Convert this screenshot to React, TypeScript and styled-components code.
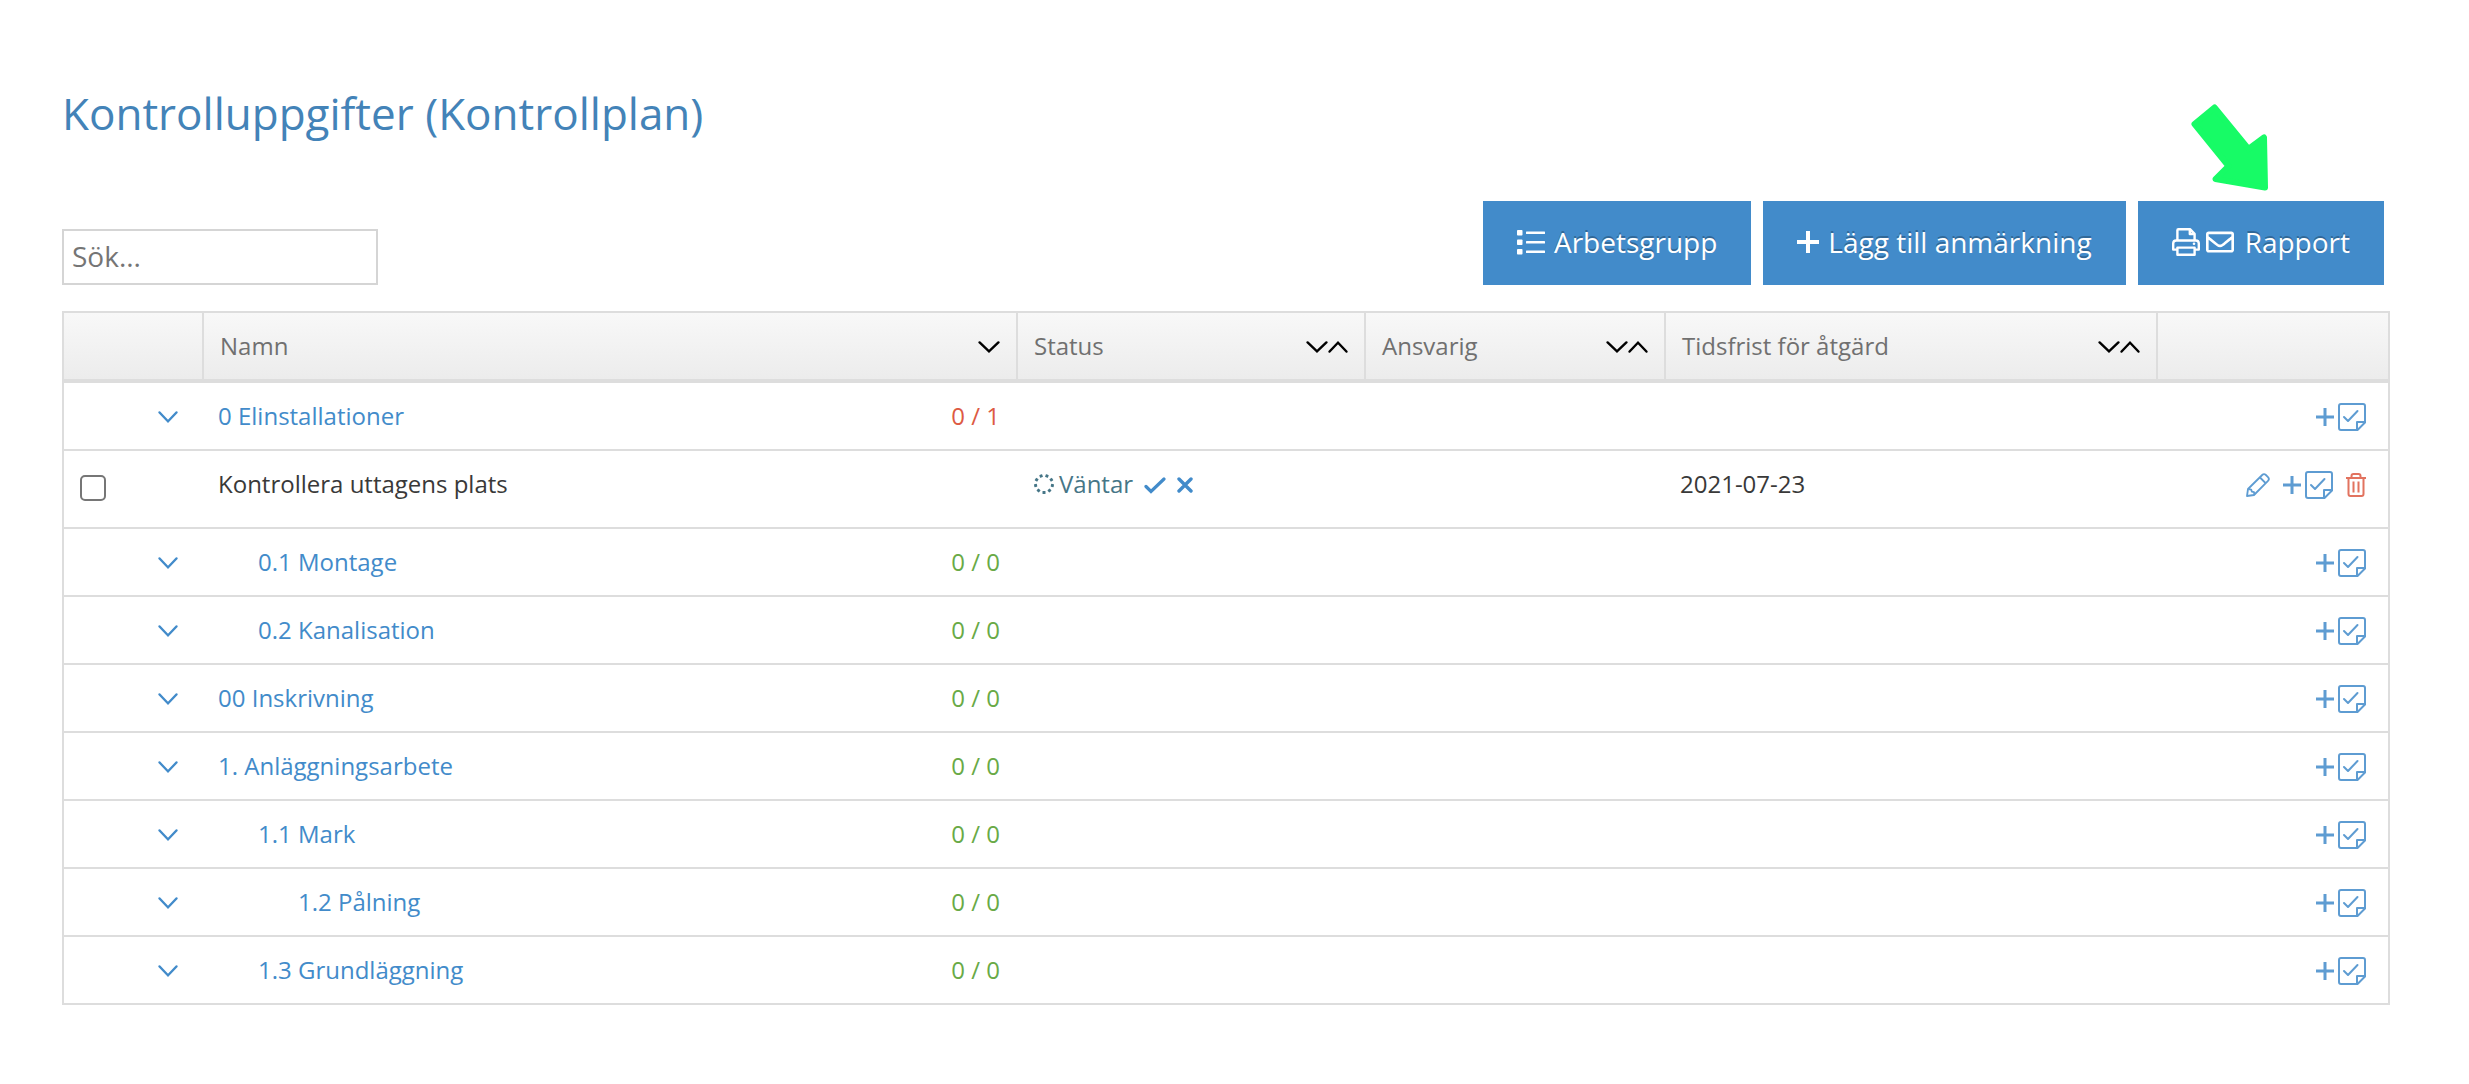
import React from 'react';
import styled, { createGlobalStyle } from 'styled-components';
import { FaRegEnvelope } from 'react-icons/fa';

const GlobalStyle = createGlobalStyle`
  *, *::before, *::after { box-sizing: border-box; }
  body {
    margin: 0;
    background: #fff;
    color: #393939;
    font-family: "Open Sans", "Noto Sans", sans-serif;
    font-size: 24px;
    line-height: 36px;
  }
`;

const Page = styled.main`
  padding: 80px 79px 79px 62px;
`;

const Title = styled.h1`
  margin: 0;
  color: #4383b8;
  font-size: 44px;
  font-weight: 400;
  line-height: 66px;
`;

const Toolbar = styled.div`
  display: flex;
  justify-content: space-between;
  align-items: flex-end;
  margin-top: 55px;
  padding-right: 6px;
`;

const SearchInput = styled.input`
  width: 316px;
  height: 56px;
  padding: 0 8px 2px;
  border: 2px solid #d5d5d5;
  border-radius: 0;
  background: #fff;
  color: #393939;
  font: inherit;
  font-size: 28px;
  &::placeholder { color: #757575; opacity: 1; }
`;

const ButtonGroup = styled.div`
  display: flex;
  gap: 12px;
`;

const ToolButton = styled.button<{ $gap?: number }>`
  position: relative;
  display: flex;
  align-items: center;
  gap: ${p => p.$gap ?? 9}px;
  height: 84px;
  padding: 0 34px 2px;
  border: 0;
  background: #428bca;
  color: #fff;
  font: inherit;
  font-size: 28px;
  text-shadow: 0 -2px 0 rgba(0, 0, 0, 0.25);
  cursor: pointer;
`;

const IconPair = styled.span`
  display: flex;
  gap: 6px;
`;

const Pointer = styled.svg`
  position: absolute;
  left: 53px;
  top: -98px;
`;

const Table = styled.table`
  width: 100%;
  margin-top: 26px;
  table-layout: fixed;
  border: 2px solid #ddd;
  border-bottom: 0;
  border-collapse: separate;
  border-spacing: 0;
`;

const Col = styled.col<{ $width?: number }>`
  width: ${p => (p.$width ? `${p.$width}px` : 'auto')};
`;

const HeadCell = styled.th<{ $start?: number; $end?: number }>`
  height: 70px;
  padding: 0 ${p => p.$end ?? 16}px 0 ${p => p.$start ?? 16}px;
  border-right: 2px solid #ddd;
  border-bottom: 4px solid #ddd;
  background: linear-gradient(#f8f8f8, #ececec);
  color: #707070;
  font-weight: 400;
  text-align: left;
  &:last-child { border-right: 0; }
`;

const HeadContent = styled.div`
  display: flex;
  align-items: center;
  justify-content: space-between;
`;

const SortButton = styled.button`
  display: flex;
  padding: 2px 0 0;
  border: 0;
  background: none;
  color: #000;
  cursor: pointer;
`;

const Row = styled.tr<{ $tall?: boolean }>`
  height: ${p => (p.$tall ? 78 : 68)}px;
`;

const Cell = styled.td<{ $start?: number; $end?: number }>`
  padding: 15px ${p => p.$end ?? 16}px 0 ${p => p.$start ?? 16}px;
  border-bottom: 2px solid #ddd;
  vertical-align: top;
`;

const CellLine = styled.div<{ $align?: string; $gap?: number; $indent?: number }>`
  display: flex;
  align-items: center;
  justify-content: ${p => p.$align ?? 'flex-start'};
  gap: ${p => p.$gap ?? 0}px;
  height: 36px;
  padding-left: ${p => (p.$indent ?? 0) * 40}px;
`;

const IconButton = styled.button<{ $danger?: boolean }>`
  display: flex;
  align-items: center;
  gap: 4px;
  padding: 2px 0 0;
  border: 0;
  background: none;
  color: ${p => (p.$danger ? '#e2735f' : '#5e9cd2')};
  cursor: pointer;
`;

const Toggle = styled(IconButton)`
  color: #428bca;
`;

const GroupLink = styled.a`
  color: #428bca;
  text-decoration: none;
`;

const Count = styled.span<{ $open: boolean }>`
  color: ${p => (p.$open ? '#dd5a43' : '#69aa46')};
`;

const StatusText = styled.span`
  display: flex;
  align-items: center;
  gap: 5px;
  color: #467687;
`;

const Checkbox = styled.input`
  appearance: none;
  width: 26px;
  height: 26px;
  margin: 8px 0 0;
  border: 2px solid #767676;
  border-radius: 5px;
  background: #fff;
  &:checked { background: #428bca; }
`;

const Chevron = ({ up = false, size = 22 }: { up?: boolean; size?: number }) => (
  <svg width={size} height="14" viewBox="0 0 22 14" fill="none" stroke="currentColor" strokeWidth="2.4" strokeLinecap="round" aria-hidden="true" preserveAspectRatio="none">
    <path d={up ? 'M1.6 11.6 11 2.6l9.4 9' : 'M1.6 2.4 11 11.4l9.4-9'} />
  </svg>
);

const ListIcon = () => (
  <svg width="28" height="26" viewBox="0 0 28 26" fill="currentColor" aria-hidden="true">
    {[1, 10.5, 20].map(y => (
      <g key={y}>
        <rect x="0" y={y} width="5.5" height="5.5" rx="0.8" />
        <rect x="9" y={y + 1.5} width="19" height="2.5" rx="0.5" />
      </g>
    ))}
  </svg>
);

const PlusIcon = ({ size, weight }: { size: number; weight: number }) => (
  <svg width={size} height={size} viewBox={`0 0 ${size} ${size}`} stroke="currentColor" strokeWidth={weight} aria-hidden="true">
    <path d={`M${size / 2} 0V${size}M0 ${size / 2}H${size}`} />
  </svg>
);

const PrinterIcon = () => (
  <svg width="28" height="28" viewBox="0 0 28 28" fill="none" stroke="currentColor" strokeWidth="2.4" strokeLinejoin="round" aria-hidden="true">
    <path d="M5.4 12.5V2.2q0-1 1-1H18l4.6 4.6v6.7" />
    <path d="M17.8 1.5V6h4.5" />
    <path d="M5.4 21.6H1.2v-6q0-3.1 3-3.1h19.600q3 0 3 3.100v6h-4.200" />
    <path d="M5.4 19.6h17.200v7.200H5.400z" />
    <circle cx="22" cy="15.8" r="1.3" fill="currentColor" stroke="none" />
  </svg>
);

const NoteIcon = () => (
  <svg width="28" height="28" viewBox="0 0 28 28" fill="none" stroke="currentColor" strokeWidth="2" strokeLinejoin="round" strokeLinecap="round" aria-hidden="true">
    <path d="M27 19.500V3q0-2-2-2H3Q1 1 1 3v22q0 2 2 2h16.500z" />
    <path d="M19 27v-8h8" />
    <path d="m6 14 4 4L19.500 8" />
  </svg>
);

const PencilIcon = () => (
  <svg width="24" height="24" viewBox="0 0 24 24" fill="none" stroke="currentColor" strokeWidth="1.8" strokeLinejoin="round" aria-hidden="true">
    <path d="M1 23 2 16 16.200 2q1.800-1.700 3.700 0L22 4.100q1.800 1.900 0 3.700L8 22z" />
    <path d="M14 4.500 19.500 10M2.500 16l2.700.6.6 2 2.200.6.4 2.600M5.500 18.500" />
  </svg>
);

const TrashIcon = () => (
  <svg width="20" height="24" viewBox="0 0 20 24" fill="none" stroke="currentColor" strokeWidth="2" aria-hidden="true">
    <path d="M0 5h20M5.500 5V3q0-2 2-2h5q2 0 2 2v2" />
    <path d="M2.500 5v16q0 2 2 2h11q2 0 2-2V5M7.500 8.500v11M12.500 8.500v11" />
  </svg>
);

const SpinnerIcon = () => (
  <svg width="20" height="20" viewBox="0 0 20 20" fill="currentColor" aria-hidden="true">
    {[0, 40, 80, 120, 160, 200, 240, 280, 320].map(a => (
      <rect key={a} x="8.5" y="17" width="3" height="3" rx="0.5" transform={`rotate(${a} 10 10)`} />
    ))}
  </svg>
);

const CheckIcon = () => (
  <svg width="22" height="18" viewBox="0 0 22 18" fill="none" stroke="currentColor" strokeWidth="3.2" strokeLinecap="round" aria-hidden="true">
    <path d="m2 10.500 5 5L20 3" />
  </svg>
);

const CrossIcon = () => (
  <svg width="16" height="16" viewBox="0 0 16 16" stroke="currentColor" strokeWidth="3.4" strokeLinecap="round" aria-hidden="true">
    <path d="m2 2 12 12M14 2 2 14" />
  </svg>
);

type Item = { name: string; level: number; open?: number };

const before: Item[] = [{ name: '0 Elinstallationer', level: 0, open: 1 }];
const after: Item[] = [
  { name: '0.1 Montage', level: 1 },
  { name: '0.2 Kanalisation', level: 1 },
  { name: '00 Inskrivning', level: 0 },
  { name: '1. Anläggningsarbete', level: 0 },
  { name: '1.1 Mark', level: 1 },
  { name: '1.2 Pålning', level: 2 },
  { name: '1.3 Grundläggning', level: 1 },
];

const AddButton = () => (
  <IconButton type="button" aria-label="Lägg till">
    <PlusIcon size={18} weight={3} />
    <NoteIcon />
  </IconButton>
);

const GroupRow = ({ name, level, open = 0 }: Item) => (
  <Row>
    <Cell $end={26}>
      <CellLine $align="flex-end">
        <Toggle type="button" aria-label={`Visa ${name}`}><Chevron size={20} /></Toggle>
      </CellLine>
    </Cell>
    <Cell $start={14} $end={18}>
      <CellLine $align="space-between" $indent={level}>
        <GroupLink href="#">{name}</GroupLink>
        <Count $open={open > 0}>{`0 / ${open}`}</Count>
      </CellLine>
    </Cell>
    <Cell />
    <Cell />
    <Cell />
    <Cell $end={22}>
      <CellLine $align="flex-end"><AddButton /></CellLine>
    </Cell>
  </Row>
);

const SortHead = ({ label, both = true }: { label: string; both?: boolean }) => (
  <HeadCell scope="col">
    <HeadContent>
      {label}
      <SortButton type="button" aria-label={`Sortera ${label}`}>
        <Chevron />
        {both && <Chevron up size={20} />}
      </SortButton>
    </HeadContent>
  </HeadCell>
);

export default function App() {
  return (
    <Page>
      <GlobalStyle />
      <Title>Kontrolluppgifter (Kontrollplan)</Title>
      <Toolbar>
        <SearchInput type="search" placeholder="Sök..." aria-label="Sök" />
        <ButtonGroup>
          <ToolButton type="button"><ListIcon />Arbetsgrupp</ToolButton>
          <ToolButton type="button"><PlusIcon size={22} weight={4} />Lägg till anmärkning</ToolButton>
          <ToolButton type="button" $gap={11}>
            <IconPair><PrinterIcon /><FaRegEnvelope size={28} /></IconPair>
            Rapport
            <Pointer width="78" height="90" viewBox="0 0 78 90" fill="#17fb66" stroke="#17fb66" strokeWidth="6" strokeLinejoin="round" aria-hidden="true">
              <path d="M22.500 3.500 56.500 45 72 33.500 73 83.500 23.500 75 36.500 62 2.500 20z" transform="translate(1 1)" />
            </Pointer>
          </ToolButton>
        </ButtonGroup>
      </Toolbar>
      <Table>
        <colgroup>
          <Col $width={140} />
          <Col />
          <Col $width={348} />
          <Col $width={300} />
          <Col $width={492} />
          <Col $width={230} />
        </colgroup>
        <thead>
          <tr>
            <HeadCell />
            <SortHead label="Namn" both={false} />
            <SortHead label="Status" />
            <SortHead label="Ansvarig" />
            <SortHead label="Tidsfrist för åtgärd" />
            <HeadCell />
          </tr>
        </thead>
        <tbody>
          {before.map(item => <GroupRow key={item.name} {...item} />)}
          <Row $tall>
            <Cell>
              <CellLine><Checkbox type="checkbox" aria-label="Kontrollera uttagens plats" /></CellLine>
            </Cell>
            <Cell $start={14}><CellLine>Kontrollera uttagens plats</CellLine></Cell>
            <Cell>
              <CellLine $gap={11}>
                <StatusText><SpinnerIcon />Väntar</StatusText>
                <Toggle type="button" aria-label="Godkänn"><CheckIcon /></Toggle>
                <Toggle type="button" aria-label="Avvisa"><CrossIcon /></Toggle>
              </CellLine>
            </Cell>
            <Cell />
            <Cell $start={14}><CellLine>2021-07-23</CellLine></Cell>
            <Cell $end={22}>
              <CellLine $align="flex-end" $gap={13}>
                <IconButton type="button" aria-label="Redigera"><PencilIcon /></IconButton>
                <AddButton />
                <IconButton type="button" aria-label="Ta bort" $danger><TrashIcon /></IconButton>
              </CellLine>
            </Cell>
          </Row>
          {after.map(item => <GroupRow key={item.name} {...item} />)}
        </tbody>
      </Table>
    </Page>
  );
}
